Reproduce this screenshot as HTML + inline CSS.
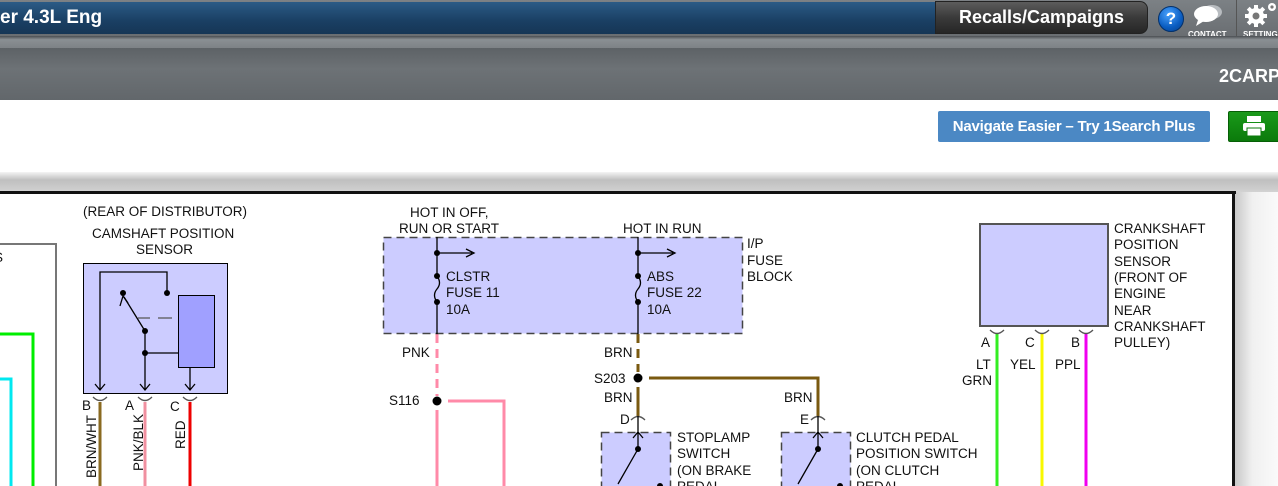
<!DOCTYPE html>
<html><head><meta charset="utf-8"><style>
*{margin:0;padding:0;box-sizing:border-box}
body{width:1278px;height:486px;overflow:hidden;background:#fff;font-family:"Liberation Sans",sans-serif;position:relative}
.a{position:absolute}
</style></head><body>
<div class="a" style="left:0;top:0;width:1278px;height:36px;background:linear-gradient(#7c8185,#6a6e72)"></div>
<div class="a" style="left:0;top:2px;width:940px;height:32px;background:linear-gradient(#2b5b86,#1a3f63 60%,#163656);"></div>
<div class="a" style="left:0;top:4px;color:#fff;font-weight:bold;font-size:19px;line-height:28px">er 4.3L Eng</div>
<div class="a" style="left:935px;top:1px;width:213px;height:33px;border-radius:0 8px 8px 0;background:linear-gradient(#5c5c5c,#3a3a3a 50%,#262626);border:1px solid #222"></div>
<div class="a" style="left:935px;top:4px;width:213px;text-align:center;color:#fff;font-weight:bold;font-size:18px;line-height:26px">Recalls/Campaigns</div>
<div class="a" style="left:1158px;top:6px;width:26px;height:26px;border-radius:50%;background:radial-gradient(circle at 40% 30%,#4aa3ff,#0a5cc0 60%,#063f8a);border:1px solid #03306a;color:#fff;font-weight:bold;font-size:17px;text-align:center;line-height:24px">?</div>
<svg class="a" style="left:1188px;top:2px" width="42" height="26"><ellipse cx="24" cy="10" rx="10" ry="7" fill="#b8bcc0"/><ellipse cx="18" cy="12" rx="12" ry="8" fill="#fff"/><path d="M10 18 L8 24 L16 19Z" fill="#fff"/></svg>
<div class="a" style="left:1188px;top:30px;color:#fff;font-weight:bold;font-size:8px">CONTACT</div>
<div class="a" style="left:1236px;top:0;width:1px;height:42px;background:#555"></div>
<svg class="a" style="left:1244px;top:2px" width="34" height="28"><g fill="#fff"><circle cx="12" cy="14" r="8"/><rect x="10" y="3" width="4" height="22"/><rect x="1" y="12" width="22" height="4"/><rect x="10" y="3" width="4" height="22" transform="rotate(45 12 14)"/><rect x="10" y="3" width="4" height="22" transform="rotate(-45 12 14)"/></g><circle cx="12" cy="14" r="3.5" fill="#777"/><circle cx="28" cy="5" r="4" fill="#fff"/><circle cx="28" cy="5" r="1.6" fill="#777"/></svg>
<div class="a" style="left:1243px;top:30px;color:#fff;font-weight:bold;font-size:8px;white-space:nowrap">SETTINGS</div>
<div class="a" style="left:0;top:36px;width:1278px;height:12px;background:linear-gradient(#4a4e52,#8a8f93 30%,#7d8286)"></div>
<div class="a" style="left:0;top:48px;width:1278px;height:52px;background:linear-gradient(#5d6266,#6d7276 40%,#62676b)"></div>
<div class="a" style="left:1219px;top:66px;color:#fff;font-weight:bold;font-size:18px;white-space:nowrap">2CARP</div>
<div class="a" style="left:0;top:100px;width:1278px;height:72px;background:#fff"></div>
<div class="a" style="left:938px;top:111px;width:272px;height:31px;background:#4b88c4;border-radius:2px;color:#fff;font-size:15px;font-weight:bold;text-align:center;line-height:31px;letter-spacing:-.2px">Navigate Easier – Try 1Search Plus</div>
<div class="a" style="left:1228px;top:111px;width:52px;height:31px;background:linear-gradient(#1a9a1a,#0b7a0b);border-radius:2px;border:1px solid #065f06"></div>
<svg class="a" style="left:1240px;top:115px" width="30" height="24"><rect x="7" y="1" width="14" height="6" fill="#fff"/><rect x="3" y="8" width="22" height="8" rx="2" fill="#fff"/><rect x="7" y="13" width="14" height="8" fill="#fff" stroke="#0b7a0b"/></svg>
<div class="a" style="left:0;top:172px;width:1278px;height:20px;background:linear-gradient(#f4f4f4,#bfbfbf 40%,#d2d2d2)"></div>
<div class="a" style="left:1235px;top:192px;width:43px;height:294px;background:linear-gradient(90deg,#c8c8c8,#f0f0f0 40%,#fafafa)"></div>
<div class="a" style="left:0;top:191px;width:1236px;height:3px;background:#111"></div>
<div class="a" style="left:1232px;top:191px;width:3px;height:295px;background:#111"></div>
<svg class="a" style="left:0;top:0" width="1232" height="486" font-family="Liberation Sans, sans-serif" font-size="13.5" fill="#111">
<g fill="none" stroke-width="3">
<path d="M0 244H56V486" stroke="#777" stroke-width="2"/>
<path d="M0 334H33V486" stroke="#00ee00"/>
<path d="M0 379H11V486" stroke="#00e8f0"/>
<path d="M100 402V486" stroke="#8a6a20"/>
<path d="M145 402V486" stroke="#f090a0"/>
<path d="M190 402V486" stroke="#ee0000"/>
<path d="M437 334V396" stroke="#ff8aa8" stroke-dasharray="9 6"/>
<path d="M437 410V486M448 401H504V486" stroke="#ff8aa8"/>
<path d="M638 334V372" stroke="#7a5a10" stroke-dasharray="9 6"/>
<path d="M649 378H818V416M638 387V416" stroke="#7a5a10"/>
<path d="M997 334V486" stroke="#33ee22"/>
<path d="M1042 334V486" stroke="#f8f800"/>
<path d="M1086 334V486" stroke="#f000f0"/>
</g>
<text x="83" y="216">(REAR OF DISTRIBUTOR)</text>
<text x="92" y="238">CAMSHAFT POSITION</text>
<text x="136" y="254">SENSOR</text>
<rect x="83.5" y="263.5" width="144" height="130" fill="#ccccff" stroke="#000"/>
<g stroke="#000" stroke-width="1.3" fill="none">
<path d="M100 390V272H167V293M145 331V390M145 353H178M190 368V390M145 331L124 297"/>
<path d="M138 318H150M158 318H172" stroke="#555"/>
<path d="M95 384L100 390L105 384M140 384L145 390L150 384M185 384L190 390L195 384M120 306L123 296L128 303"/>
<path d="M93 397Q100 404 107 397M138 397Q145 404 152 397M183 397Q190 404 197 397" stroke="#555"/>
</g>
<rect x="178.5" y="295.5" width="36" height="72" fill="#a0a0ff" stroke="#000"/>
<g fill="#000"><circle cx="123" cy="293" r="3"/><circle cx="167" cy="293" r="3"/><circle cx="145" cy="331" r="3"/><circle cx="145" cy="353" r="3"/></g>
<text x="82" y="410">B</text><text x="125" y="410">A</text><text x="170" y="411">C</text>
<text transform="translate(96 478) rotate(-90)">BRN/WHT</text>
<text transform="translate(143 471) rotate(-90)">PNK/BLK</text>
<text transform="translate(185 449) rotate(-90)">RED</text>
<text x="410" y="217">HOT IN OFF,</text>
<text x="399" y="233">RUN OR START</text>
<text x="623" y="233">HOT IN RUN</text>
<rect x="383.5" y="237.5" width="359" height="96" fill="#ccccff" stroke="#444" stroke-width="1.5" stroke-dasharray="8 5"/>
<g stroke="#000" stroke-width="1.3" fill="none">
<path d="M437 237V276M437 302V334M437 253H472M466 249L474 253L466 257M437 276Q442 283 437 289Q432 295 437 302"/>
<path d="M638 237V276M638 302V334M638 253H673M667 249L675 253L667 257M638 276Q643 283 638 289Q633 295 638 302"/>
</g>
<g fill="#000"><circle cx="437" cy="253" r="3"/><circle cx="437" cy="276" r="3"/><circle cx="437" cy="302" r="3"/><circle cx="638" cy="253" r="3"/><circle cx="638" cy="276" r="3"/><circle cx="638" cy="302" r="3"/><circle cx="437" cy="401" r="4.5"/><circle cx="638" cy="378" r="4.5"/></g>
<text x="446" y="281">CLSTR</text><text x="446" y="297">FUSE 11</text><text x="446" y="314">10A</text>
<text x="647" y="281">ABS</text><text x="647" y="297">FUSE 22</text><text x="647" y="314">10A</text>
<text x="747" y="248">I/P</text><text x="747" y="265">FUSE</text><text x="747" y="281">BLOCK</text>
<text x="402" y="357">PNK</text><text x="389" y="405">S116</text>
<text x="604" y="357">BRN</text><text x="594" y="383">S203</text>
<text x="604" y="402">BRN</text><text x="784" y="402">BRN</text>
<text x="620" y="424">D</text><text x="800" y="424">E</text>
<rect x="601.5" y="432.5" width="69" height="70" fill="#ccccff" stroke="#444" stroke-width="1.5" stroke-dasharray="8 5"/>
<rect x="781.5" y="432.5" width="69" height="70" fill="#ccccff" stroke="#444" stroke-width="1.5" stroke-dasharray="8 5"/>
<g stroke="#000" stroke-width="1.3" fill="none">
<path d="M631 420Q638 413 645 420M811 420Q818 413 825 420" stroke="#555"/>
<path d="M638 416V449M633 438L638 432L643 438M638 449L618 484M818 416V449M813 438L818 432L823 438M818 449L798 484"/>
</g>
<g fill="#000"><circle cx="638" cy="449" r="3"/><circle cx="660" cy="486" r="3"/><circle cx="818" cy="449" r="3"/><circle cx="840" cy="486" r="3"/></g>
<text x="677" y="442">STOPLAMP</text><text x="677" y="458">SWITCH</text><text x="677" y="475">(ON BRAKE</text><text x="677" y="491">PEDAL</text>
<text x="856" y="442">CLUTCH PEDAL</text><text x="856" y="458">POSITION SWITCH</text><text x="856" y="475">(ON CLUTCH</text><text x="856" y="491">PEDAL</text>
<rect x="980" y="224" width="128" height="102" fill="#ccccff" stroke="#555" stroke-width="2"/>
<g><text x="1114" y="233">CRANKSHAFT</text><text x="1114" y="249">POSITION</text><text x="1114" y="266">SENSOR</text><text x="1114" y="282">(FRONT OF</text><text x="1114" y="298">ENGINE</text><text x="1114" y="315">NEAR</text><text x="1114" y="331">CRANKSHAFT</text><text x="1114" y="347">PULLEY)</text></g>
<g stroke="#555" stroke-width="1.3" fill="none"><path d="M990 330Q997 337 1004 330M1035 330Q1042 337 1049 330M1079 330Q1086 337 1093 330"/></g>
<text x="981" y="347">A</text><text x="1025" y="347">C</text><text x="1071" y="347">B</text>
<text x="976" y="369">LT</text><text x="962" y="385">GRN</text><text x="1010" y="369">YEL</text><text x="1055" y="369">PPL</text>
</svg>
<div class="a" style="left:-6px;top:250px;font-size:13.5px;color:#111">S</div>
</body></html>
